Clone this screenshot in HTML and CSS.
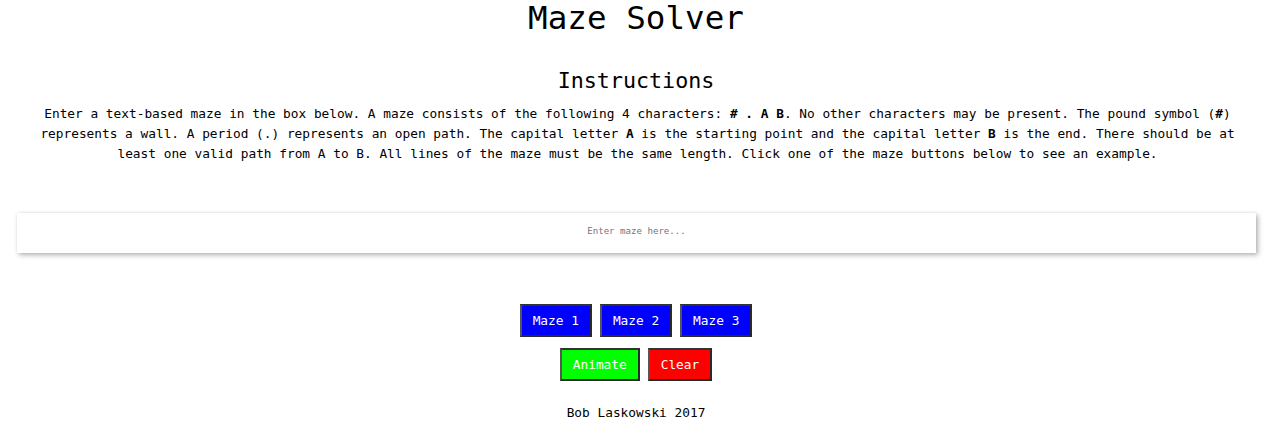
FILE: index.html
```html
<!DOCTYPE html>
<html lang="en">
<head>
<meta charset="utf-8">
<title>Maze Solver</title>
<link rel="stylesheet" href="styles.css">
</head>
<body>
<main class="page">
  <h1 class="title">Maze Solver</h1>
  <h2 class="subtitle">Instructions</h2>
  <p class="instructions">Enter a text-based maze in the box below. A maze consists of the following 4 characters: <b># . A B</b>. No other characters may be present. The pound symbol (<b>#</b>) represents a wall. A period (.) represents an open path. The capital letter <b>A</b> is the starting point and the capital letter <b>B</b> is the end. There should be at least one valid path from A to B. All lines of the maze must be the same length. Click one of the maze buttons below to see an example.</p>
  <textarea class="maze-input" placeholder="Enter maze here..."></textarea>
  <div class="button-row first-row">
    <button class="btn btn-blue">Maze 1</button>
    <button class="btn btn-blue">Maze 2</button>
    <button class="btn btn-blue">Maze 3</button>
  </div>
  <div class="button-row second-row">
    <button class="btn btn-green">Animate</button>
    <button class="btn btn-red">Clear</button>
  </div>
  <footer class="footer">Bob Laskowski 2017</footer>
</main>
</body>
</html>
```

FILE: styles.css
```css
html, body {
  margin: 0;
  padding: 0;
  background: #ffffff;
}

body {
  font-family: "DejaVu Sans Mono", "Liberation Mono", monospace;
  color: #000;
}

.page {
  display: flex;
  flex-direction: column;
  align-items: center;
  padding-right: 8px;
}

.title {
  margin: 0;
  font-size: 32.6px;
  line-height: 36px;
  font-weight: normal;
}

.subtitle {
  margin: 30.5px 0 0;
  font-size: 21.7px;
  line-height: 28px;
  font-weight: normal;
}

.instructions {
  margin: 9px 0 0 3px;
  width: 1210px;
  font-size: 12.8px;
  line-height: 20px;
  text-align: center;
}

.instructions b {
  font-weight: bold;
  line-height: 20px;
}

.maze-input {
  display: block;
  align-self: flex-start;
  margin: 49.5px 0 0 17px;
  width: 1239px;
  height: 40px;
  box-sizing: border-box;
  border: none;
  padding: 12px 8px 0;
  resize: none;
  background: #fff;
  box-shadow: 2px 2px 5px rgba(0, 0, 0, 0.3), 0 0 3px rgba(0, 0, 0, 0.06);
  font-family: "DejaVu Sans Mono", "Liberation Mono", monospace;
  font-size: 9.1px;
  line-height: 12px;
  text-align: center;
  outline: none;
}

.maze-input::placeholder {
  color: #757575;
}

.button-row {
  display: flex;
  gap: 8px;
  justify-content: center;
}

.first-row {
  margin-top: 51px;
}

.second-row {
  margin-top: 11px;
}

.btn {
  font-family: "DejaVu Sans Mono", "Liberation Mono", monospace;
  font-size: 12.8px;
  line-height: 15px;
  padding: 7px 11px;
  border: 2px solid #2a2a2a;
  border-left-color: #555;
  border-top-color: #333;
  color: #fff;
  cursor: pointer;
}

.btn-blue {
  background: #0000ff;
}

.btn-green {
  background: #00ff00;
}

.btn-red {
  background: #ff0000;
}

.footer {
  margin-top: 21.5px;
  font-size: 12.8px;
  line-height: 20px;
}
```
